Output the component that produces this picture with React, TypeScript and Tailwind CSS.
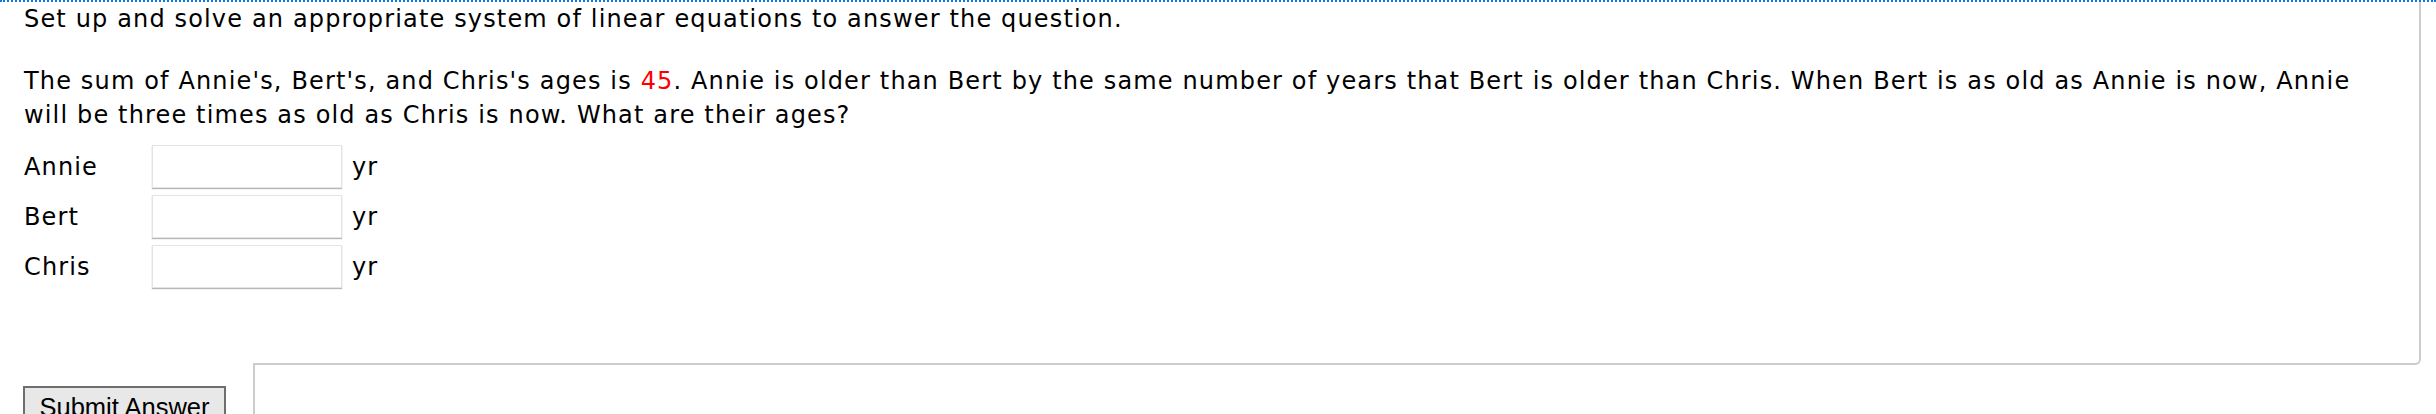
import React from 'react';

const ROWS = ['Annie', 'Bert', 'Chris'];

function AgeRow({ name }: { name: string }) {
  return (
    <div className="flex items-center h-[43px]">
      <label className="w-[128px]">{name}</label>
      <input
        type="text"
        className="w-[190px] h-[43px] bg-white border border-[#e4e4e4] shadow-[0_1px_1px_rgba(0,0,0,0.28)] outline-none"
      />
      <span className="ml-[10px]">yr</span>
    </div>
  );
}

export default function App() {
  return (
    <div className="h-[414px] w-full overflow-hidden bg-white text-black font-['DejaVu_Sans',Verdana,sans-serif] text-[24px] leading-[34px] tracking-[1.15px]">
      <div className="border-t-2 border-dotted border-[#0f78d8]">
        <div className="w-[2421px] h-[363px] border-r-2 border-b-2 border-solid border-[#cccccc] rounded-br-[6px] pl-[24px]">
          <p>Set up and solve an appropriate system of linear equations to answer the question.</p>
          <p className="mt-[28px]">
            The sum of Annie's, Bert's, and Chris's ages is <span className="text-[#ff0000]">45</span>. Annie is older
            than Bert by the same number of years that Bert is older than Chris. When Bert is as old as Annie is now,
            Annie
            <br />
            will be three times as old as Chris is now. What are their ages?
          </p>
          <div className="mt-[13px] flex flex-col gap-[7px]">
            {ROWS.map((r) => (
              <AgeRow key={r} name={r} />
            ))}
          </div>
        </div>
        <div className="flex">
          <div className="w-[253px] -mt-[2px] h-[60px] bg-white relative pl-[23px] pt-[23px]">
            <button className="w-[203px] border-2 border-[#6e6e6e] bg-[#e8e8e8] pt-[5px] pb-[6px] font-['Liberation_Sans',Arial,sans-serif] text-[25.5px] leading-[29px] tracking-normal text-black text-center">
              Submit Answer
            </button>
          </div>
          <div className="flex-1 h-[60px] border-l-2 border-[#cccccc]" />
        </div>
      </div>
    </div>
  );
}
